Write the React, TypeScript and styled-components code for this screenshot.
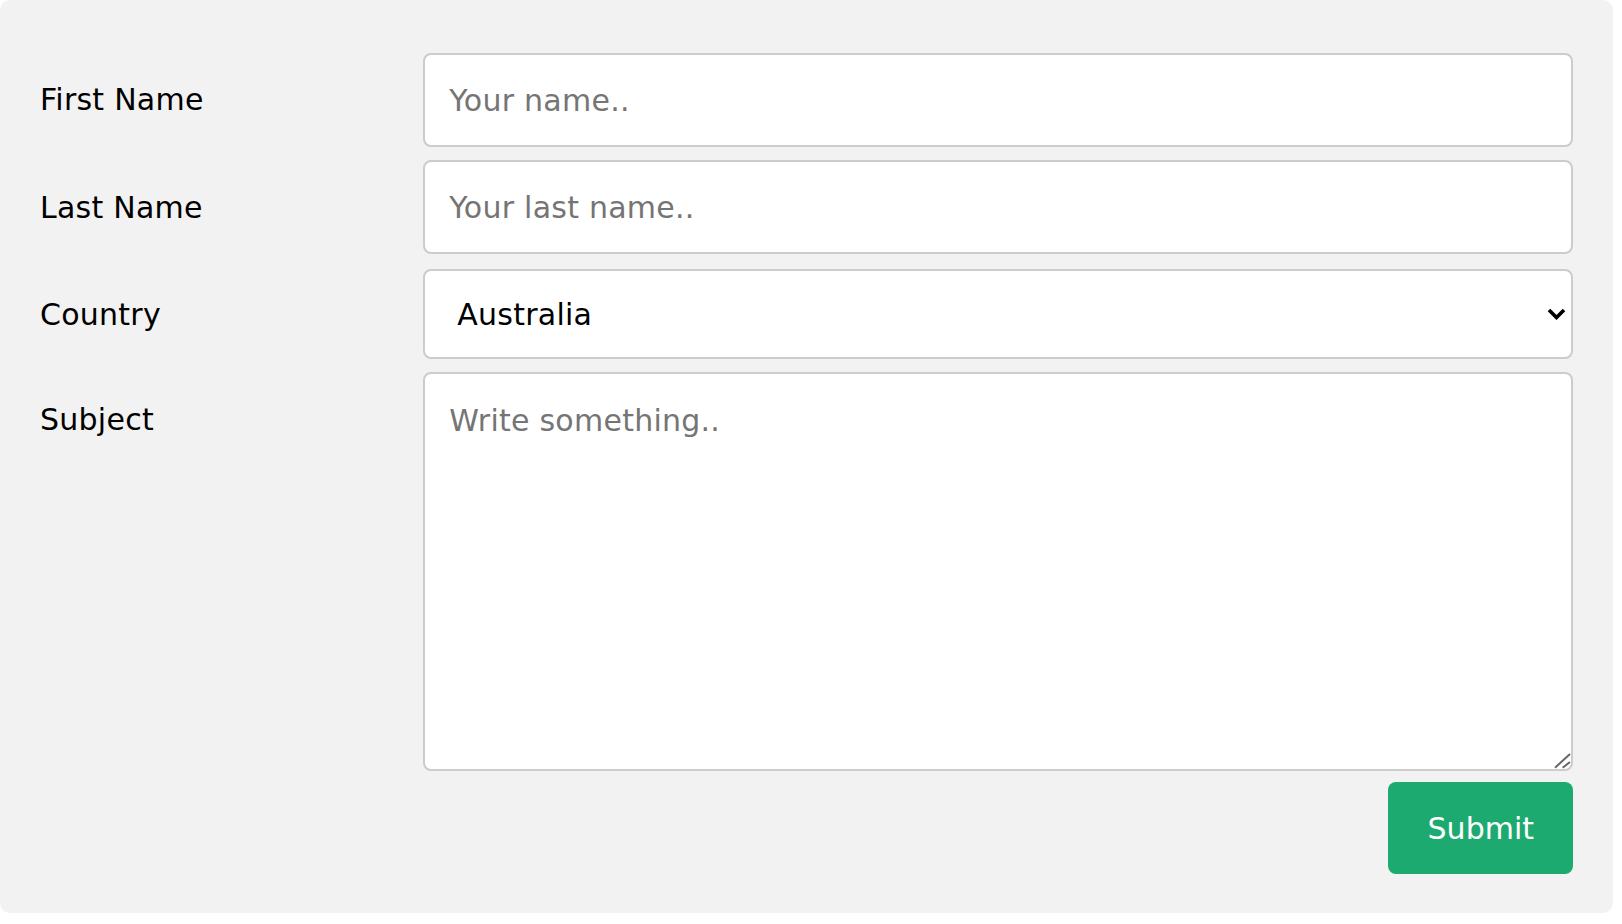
import React from 'react'
import styled, { createGlobalStyle } from 'styled-components'

const GlobalStyle = createGlobalStyle`
  html, body {
    margin: 0;
    padding: 0;
    background: #fff;
  }
  body {
    font-family: 'DejaVu Sans', Verdana, sans-serif;
    font-size: 30px;
  }
`

const Container = styled.form`
  box-sizing: border-box;
  width: 1613px;
  background: #f2f2f2;
  border-radius: 10px;
  padding: 40px 40px 39px;
`

const Row = styled.div<{ $top: number }>`
  display: grid;
  grid-template-columns: 25% 75%;
  margin-top: ${(p) => p.$top}px;
`

const Label = styled.label<{ $offset: number }>`
  display: block;
  color: #000;
  font-size: 30px;
  line-height: 35px;
  letter-spacing: 0.25px;
  padding-top: ${(p) => p.$offset}px;
`

const fieldBase = `
  box-sizing: border-box;
  width: 100%;
  border: 2px solid #ccc;
  border-radius: 8px;
  background: #fff;
  font-family: 'DejaVu Sans', Verdana, sans-serif;
  font-size: 30px;
  letter-spacing: 0.25px;
  color: #000;
  outline: none;
  margin: 0;
  &::placeholder {
    color: #757575;
  }
`

const TextInput = styled.input`
  ${fieldBase}
  display: block;
  height: 94px;
  padding: 1px 24px 0;
`

const FieldWrap = styled.div`
  position: relative;
`

const Select = styled.select`
  ${fieldBase}
  display: block;
  height: 90px;
  padding: 0 24px 0 32px;
  appearance: none;
  -webkit-appearance: none;
`

const Chevron = styled.svg`
  position: absolute;
  right: 7px;
  top: 39px;
  pointer-events: none;
`

const TextArea = styled.textarea`
  ${fieldBase}
  display: block;
  height: 399px;
  padding: 29px 24px 24px;
  line-height: 35px;
  resize: none;
`

const ResizeGrip = styled.svg`
  position: absolute;
  right: 2px;
  bottom: 2px;
  pointer-events: none;
`

const Actions = styled.div`
  display: flex;
  justify-content: flex-end;
  margin-top: 11px;
`

const SubmitButton = styled.button`
  box-sizing: border-box;
  height: 92px;
  padding: 0 39px 0 40px;
  border: none;
  border-radius: 8px;
  background: #1daa70;
  color: #fff;
  font-family: 'DejaVu Sans', Verdana, sans-serif;
  font-size: 30px;
  cursor: pointer;
`

export default function App() {
  return (
    <>
      <GlobalStyle />
      <Container onSubmit={(e) => e.preventDefault()}>
        <Row $top={13}>
          <Label htmlFor="fname" $offset={29}>
            First Name
          </Label>
          <TextInput id="fname" type="text" placeholder="Your name.." />
        </Row>
        <Row $top={13}>
          <Label htmlFor="lname" $offset={30}>
            Last Name
          </Label>
          <TextInput id="lname" type="text" placeholder="Your last name.." />
        </Row>
        <Row $top={15}>
          <Label htmlFor="country" $offset={28}>
            Country
          </Label>
          <FieldWrap>
            <Select id="country" defaultValue="australia">
              <option value="australia">Australia</option>
              <option value="canada">Canada</option>
              <option value="usa">USA</option>
            </Select>
            <Chevron width="19" height="12" viewBox="0 0 19 12">
              <polyline
                points="2,2 9.5,9.5 17,2"
                fill="none"
                stroke="#000"
                strokeWidth="3.6"
              />
            </Chevron>
          </FieldWrap>
        </Row>
        <Row $top={13}>
          <Label htmlFor="subject" $offset={30}>
            Subject
          </Label>
          <FieldWrap>
            <TextArea id="subject" placeholder="Write something.." />
            <ResizeGrip width="18" height="18" viewBox="0 0 18 18">
              <line x1="2" y1="16.7" x2="17" y2="3" stroke="#666" strokeWidth="2" />
              <line x1="9.7" y1="16.7" x2="17" y2="11" stroke="#666" strokeWidth="2" />
            </ResizeGrip>
          </FieldWrap>
        </Row>
        <Actions>
          <SubmitButton type="submit">Submit</SubmitButton>
        </Actions>
      </Container>
    </>
  )
}
